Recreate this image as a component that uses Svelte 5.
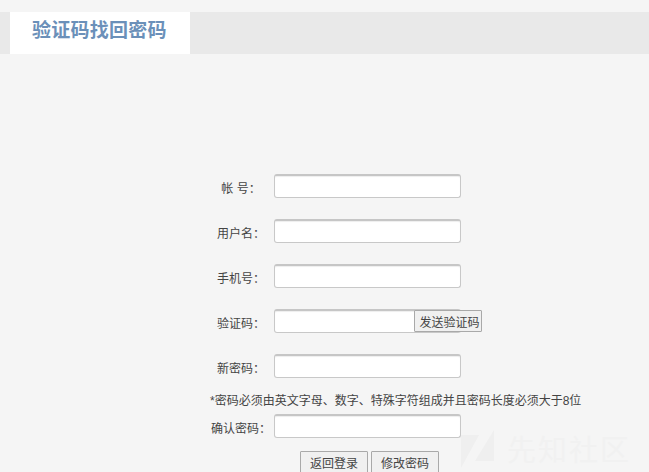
<script>
  const rowsTop = [
    { label: '帐 号：', gap: true },
    { label: '用户名：', gap: true },
    { label: '手机号：', gap: true },
    { label: '验证码：', gap: true, send: true },
    { label: '新密码：', gap: false }
  ];
</script>

<div class="page">
  <header class="band">
    <h1 class="tab">验证码找回密码</h1>
  </header>

  <form class="form" onsubmit={(e) => e.preventDefault()}>
    {#each rowsTop as row}
      <div class="row">
        <label class="label" for={row.label}>{row.label}</label>
        <input class="field" id={row.label} type="text" />
        {#if row.send}
          <button class="btn send" type="button">发送验证码</button>
        {/if}
      </div>
    {/each}

    <p class="note">*密码必须由英文字母、数字、特殊字符组成并且密码长度必须大于8位</p>

    <div class="row">
      <label class="label" for="confirm">确认密码：</label>
      <input class="field" id="confirm" type="password" />
    </div>

    <div class="actions">
      <button class="btn" type="button">返回登录</button>
      <button class="btn" type="submit">修改密码</button>
    </div>
  </form>

  <div class="watermark" aria-hidden="true">
    <svg width="34" height="42" viewBox="0 0 34 42">
      <polygon points="0,5 18,5 0,38" fill="#efefef" />
      <polygon points="33,0 33,31 14,31" fill="#efefef" />
    </svg>
    <span>先知社区</span>
  </div>
</div>

<style>
  :global(body) {
    margin: 0;
    background: #f5f5f5;
    overflow: hidden;
  }

  .page {
    position: relative;
    height: 472px;
    overflow: hidden;
    padding-top: 12px;
    box-sizing: border-box;
    background: #f5f5f5;
    font-family: "Liberation Sans", "Noto Sans CJK SC", sans-serif;
    font-size: 12px;
    color: #333;
  }

  .band {
    height: 42px;
    background: #e9e9e9;
    padding-left: 10px;
  }

  .tab {
    width: 180px;
    height: 42px;
    margin: 0;
    box-sizing: border-box;
    padding-left: 22px;
    background: #fff;
    color: #6b90b9;
    font-size: 19px;
    font-weight: 700;
    line-height: 38px;
    letter-spacing: 0.25px;
  }

  .form {
    padding: 120px 0 0 208px;
  }

  .row {
    display: flex;
    align-items: center;
    height: 24px;
    margin-bottom: 21px;
  }

  .label {
    width: 66px;
    text-align: center;
    line-height: 24px;
    padding-top: 5px;
    color: #444;
  }

  .field {
    width: 187px;
    height: 24px;
    box-sizing: border-box;
    margin: 0;
    padding: 0 4px;
    background: #fff;
    border: 1px solid #c8c8c8;
    border-top: 2px solid #c6c6c6;
    border-radius: 3px;
    box-shadow: inset 0 1px 1px #eee;
    outline: none;
  }

  .note {
    margin: -5px 0 0 2px;
    height: 20px;
    line-height: 14px;
    white-space: nowrap;
    color: #444;
  }

  .btn {
    width: 68px;
    height: 22px;
    box-sizing: border-box;
    margin: 0;
    padding: 0;
    font: inherit;
    color: #444;
    background: #f0f0f0;
    border: 1px solid #a9a9a9;
    border-radius: 1px;
    white-space: nowrap;
  }

  .send {
    margin-left: -47px;
    padding-left: 3px;
    position: relative;
  }

  .actions {
    display: flex;
    gap: 3px;
    margin: -8px 0 0 92px;
  }

  .watermark {
    position: absolute;
    left: 461px;
    top: 430px;
    display: flex;
    align-items: flex-start;
    gap: 12px;
    color: #f1f1f1;
    font-size: 29px;
    font-family: "Noto Sans CJK SC", sans-serif;
    letter-spacing: 2px;
    line-height: 36px;
    white-space: nowrap;
    pointer-events: none;
  }
</style>
